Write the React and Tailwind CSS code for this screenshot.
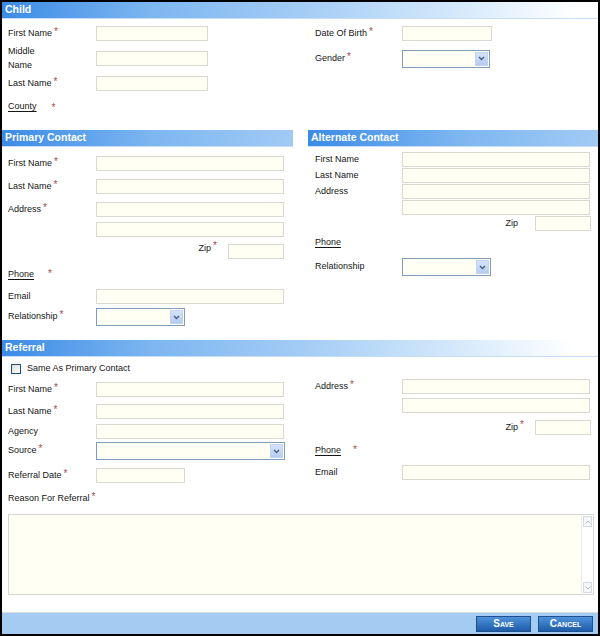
import React from 'react'

const Star = () => (
  <span className="ml-[2px] text-[10px] leading-none text-[#a04e4e] self-start">*</span>
)

const Label = ({ children, req, w = 'w-[88px]' }) => (
  <div className={`${w} shrink-0 flex items-center`}>
    <span>{children}</span>
    {req && <Star />}
  </div>
)

const Field = ({ w = 'w-[188px]' }) => (
  <input type="text" className={`${w} h-[15px] border border-[#d9d9d1] bg-[#fffff3] outline-none`} />
)

const Select = ({ w = 'w-[89px]' }) => (
  <div className={`${w} h-[18px] flex border border-[#7f9db9] bg-[#fffff3] p-px`}>
    <div className="flex-1" />
    <div className="w-[13px] flex items-center justify-center bg-gradient-to-b from-[#d6e4fa] to-[#b4cbf2] border border-[#c3d3ee]">
      <svg width="7" height="5" viewBox="0 0 7 5">
        <path d="M1 1 L3.5 3.5 L6 1" fill="none" stroke="#4a5d80" strokeWidth="1.4" />
      </svg>
    </div>
  </div>
)

const Header = ({ title, className = '' }) => (
  <div
    className={`h-[17px] flex items-center pl-[3px] text-[10.5px] font-bold text-white bg-[linear-gradient(to_right,#3b8be6_0px,#7db6f0_150px,#a3ccf5_300px,#d3e8fb_450px,#ffffff_572px)] border-b border-[#c6def7] ${className}`}
  >
    {title}
  </div>
)

const Link = ({ children }) => <span className="underline underline-offset-2">{children}</span>

function App() {
  return (
    <div className="w-[600px] h-[636px] border-2 border-black bg-white flex flex-col font-['Liberation_Sans',Arial,sans-serif] text-[9px] text-[#151515]">
      {/* Child */}
      <Header title="Child" />
      <div className="grid grid-cols-[306px_290px] pt-[2px]">
        <div className="pl-[6px] flex flex-col">
          <div className="h-[25px] flex items-center">
            <Label req>First Name</Label>
            <Field w="w-[112px]" />
          </div>
          <div className="h-[25px] flex items-center">
            <Label>
              Middle
              <br />
              Name
            </Label>
            <Field w="w-[112px]" />
          </div>
          <div className="h-[25px] flex items-center">
            <Label req>Last Name</Label>
            <Field w="w-[112px]" />
          </div>
          <div className="h-[22px] flex items-center">
            <Link>County</Link>
            <span className="ml-[15px] text-[10px] leading-none text-[#a04e4e] self-start mt-[7px]">*</span>
          </div>
        </div>
        <div className="pl-[7px] flex flex-col">
          <div className="h-[25px] flex items-center">
            <Label req w="w-[87px]">Date Of Birth</Label>
            <Field w="w-[90px]" />
          </div>
          <div className="h-[25px] flex items-center">
            <Label req w="w-[87px]">Gender</Label>
            <Select w="w-[88px]" />
          </div>
        </div>
      </div>

      {/* Contacts */}
      <div className="grid grid-cols-[291px_290px] gap-x-[15px] mt-[12px]">
        <div className="flex flex-col">
          <Header title="Primary Contact" />
          <div className="pl-[6px] pr-[9px] flex flex-col">
            <div className="mt-[9px] h-[15px] flex items-center">
              <Label req>First Name</Label>
              <Field />
            </div>
            <div className="mt-[8px] h-[15px] flex items-center">
              <Label req>Last Name</Label>
              <Field />
            </div>
            <div className="mt-[8px] h-[15px] flex items-center">
              <Label req>Address</Label>
              <Field />
            </div>
            <div className="mt-[5px] h-[15px] flex items-center">
              <Label />
              <Field />
            </div>
            <div className="mt-[7px] h-[15px] flex items-center justify-end">
              <span className="self-start -mt-[2px]">Zip</span>
              <span className="ml-[2px] text-[10px] leading-none text-[#a04e4e] self-start -mt-[3px]">*</span>
              <div className="w-[11px]" />
              <Field w="w-[56px]" />
            </div>
            <div className="mt-[8px] h-[16px] flex items-center">
              <Link>Phone</Link>
              <span className="ml-[14px] text-[10px] leading-none text-[#a04e4e] self-start mt-[2px]">*</span>
            </div>
            <div className="mt-[6px] h-[15px] flex items-center">
              <Label>Email</Label>
              <Field />
            </div>
            <div className="mt-[4px] h-[18px] flex items-center">
              <Label req>Relationship</Label>
              <Select />
            </div>
          </div>
        </div>
        <div className="flex flex-col">
          <Header title="Alternate Contact" />
          <div className="pl-[7px] pr-[7px] flex flex-col">
            <div className="mt-[5px] h-[15px] flex items-center">
              <Label w="w-[87px]">First Name</Label>
              <Field />
            </div>
            <div className="mt-[1px] h-[15px] flex items-center">
              <Label w="w-[87px]">Last Name</Label>
              <Field />
            </div>
            <div className="mt-[1px] h-[15px] flex items-center">
              <Label w="w-[87px]">Address</Label>
              <Field />
            </div>
            <div className="mt-[1px] h-[15px] flex items-center">
              <Label w="w-[87px]" />
              <Field />
            </div>
            <div className="mt-[1px] h-[15px] flex items-center justify-end">
              <span>Zip</span>
              <div className="w-[17px]" />
              <Field w="w-[56px]" />
            </div>
            <div className="mt-[4px] h-[16px] flex items-center">
              <Link>Phone</Link>
            </div>
            <div className="mt-[7px] h-[18px] flex items-center">
              <Label w="w-[87px]">Relationship</Label>
              <Select />
            </div>
          </div>
        </div>
      </div>

      {/* Referral */}
      <Header title="Referral" className="mt-[14px]" />
      <div className="grid grid-cols-[306px_290px]">
        <div className="pl-[6px] flex flex-col">
          <div className="mt-[7px] h-[10px] flex items-center">
            <div className="ml-[3px] w-[10px] h-[10px] border border-[#1c5180] bg-gradient-to-br from-[#dcdcd7] to-white" />
            <span className="ml-[6px]">Same As Primary Contact</span>
          </div>
          <div className="mt-[8px] h-[15px] flex items-center">
            <Label req>First Name</Label>
            <Field />
          </div>
          <div className="mt-[7px] h-[15px] flex items-center">
            <Label req>Last Name</Label>
            <Field />
          </div>
          <div className="mt-[5px] h-[15px] flex items-center">
            <Label>Agency</Label>
            <Field />
          </div>
          <div className="mt-[3px] h-[18px] flex items-center">
            <Label req>Source</Label>
            <Select w="w-[189px]" />
          </div>
          <div className="mt-[8px] h-[15px] flex items-center">
            <Label req>Referral Date</Label>
            <Field w="w-[89px]" />
          </div>
        </div>
        <div className="pl-[7px] pr-[7px] flex flex-col">
          <div className="mt-[22px] h-[15px] flex items-center">
            <Label req w="w-[87px]">Address</Label>
            <Field />
          </div>
          <div className="mt-[4px] h-[15px] flex items-center">
            <Label w="w-[87px]" />
            <Field />
          </div>
          <div className="mt-[7px] h-[15px] flex items-center justify-end">
            <span>Zip</span>
            <span className="ml-[2px] text-[10px] leading-none text-[#a04e4e] self-start">*</span>
            <div className="w-[11px]" />
            <Field w="w-[56px]" />
          </div>
          <div className="mt-[8px] h-[16px] flex items-center">
            <Link>Phone</Link>
            <span className="ml-[12px] text-[10px] leading-none text-[#a04e4e] self-start mt-[2px]">*</span>
          </div>
          <div className="mt-[6px] h-[15px] flex items-center">
            <Label w="w-[87px]">Email</Label>
            <Field />
          </div>
        </div>
      </div>

      <div className="mt-[10px] h-[12px] pl-[6px] flex items-center">
        <Label req w="w-[120px]">Reason For Referral</Label>
      </div>
      <div className="mt-[9px] ml-[6px] mr-[4px] h-[81px] flex border border-[#d6d6d6] bg-[#fffff3]">
        <div className="flex-1" />
        <div className="w-[12px] flex flex-col justify-between bg-white border-l border-[#ecece6] py-px">
          <div className="h-[11px] mx-px flex items-center justify-center border border-[#d3dbe6] bg-[#f4f6f8]">
            <svg width="6" height="4" viewBox="0 0 6 4">
              <path d="M0.5 3.5 L3 1 L5.5 3.5" fill="none" stroke="#b7bec8" strokeWidth="1" />
            </svg>
          </div>
          <div className="h-[11px] mx-px flex items-center justify-center border border-[#d3dbe6] bg-[#f4f6f8]">
            <svg width="6" height="4" viewBox="0 0 6 4">
              <path d="M0.5 0.5 L3 3 L5.5 0.5" fill="none" stroke="#b7bec8" strokeWidth="1" />
            </svg>
          </div>
        </div>
      </div>

      {/* Footer */}
      <div className="mt-auto h-[22px] border-t border-[#dcdcdc] bg-[#a4ccf2] flex items-center justify-end gap-[7px] pr-[5px]">
        <button className="w-[55px] h-[16px] flex items-center justify-center border border-[#1f4f8c] bg-gradient-to-b from-[#4f93dc] to-[#1e5ba8] text-white font-bold text-[10px] [font-variant:small-caps]">
          Save
        </button>
        <button className="w-[55px] h-[16px] flex items-center justify-center border border-[#1f4f8c] bg-gradient-to-b from-[#4f93dc] to-[#1e5ba8] text-white font-bold text-[10px] [font-variant:small-caps]">
          Cancel
        </button>
      </div>
    </div>
  )
}

export default App
